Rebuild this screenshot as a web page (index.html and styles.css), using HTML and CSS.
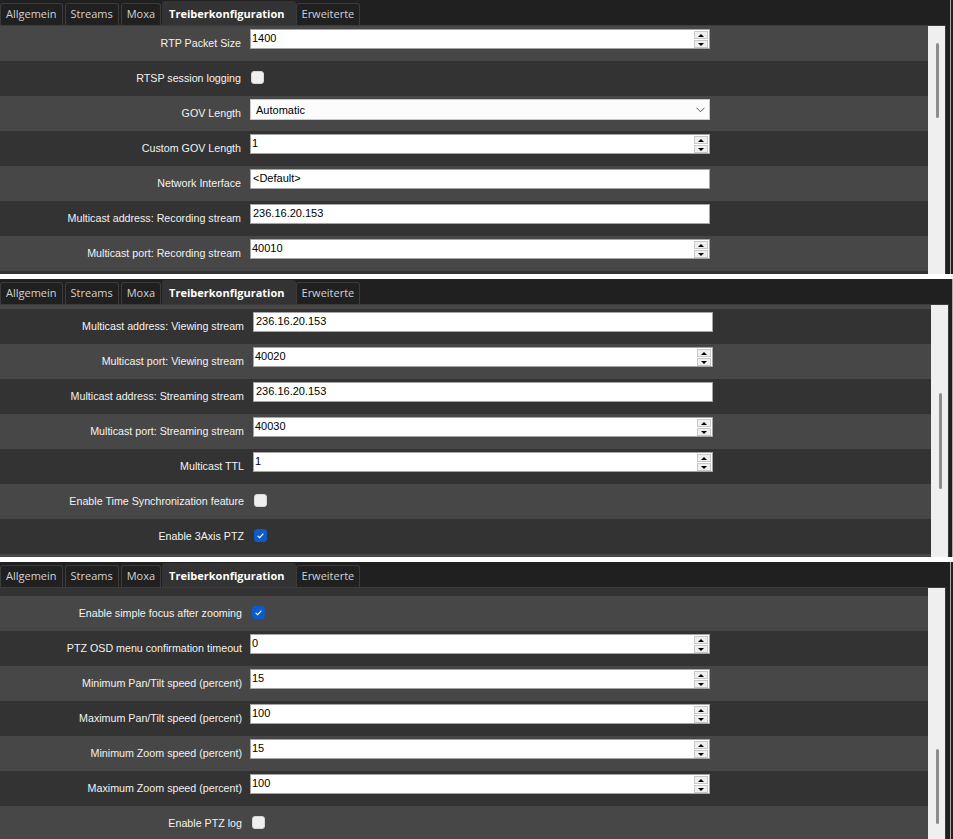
FILE: index.html
```html
<!DOCTYPE html>
<html>
<head>
<meta charset="utf-8">
<title>Treiberkonfiguration</title>
<link rel="stylesheet" href="styles.css">
</head>
<body>
<div class="stack">

  <section class="panel p1">
    <div class="main">
      <div class="tabbar">
        <div class="tab">Allgemein</div>
        <div class="tab">Streams</div>
        <div class="tab">Moxa</div>
        <div class="tab active">Treiberkonfiguration</div>
        <div class="tab">Erweiterte</div>
      </div>
      <div class="frame">
        <div class="rows">
          <div class="row l"><div class="label">RTP Packet Size</div><div class="input spin"><span class="value">1400</span><span class="spin-btns"><span class="sb up"></span><span class="sb down"></span></span></div></div>
          <div class="row d"><div class="label">RTSP session logging</div><span class="check"></span></div>
          <div class="row l"><div class="label">GOV Length</div><div class="select"><span class="value">Automatic</span><svg class="chev" width="9" height="6" viewBox="0 0 9 6"><polyline points="0.5,0.8 4.5,4.8 8.5,0.8" fill="none" stroke="#5a5a5a" stroke-width="1"/></svg></div></div>
          <div class="row d"><div class="label">Custom GOV Length</div><div class="input spin"><span class="value">1</span><span class="spin-btns"><span class="sb up"></span><span class="sb down"></span></span></div></div>
          <div class="row l"><div class="label">Network Interface</div><div class="input text"><span class="value">&lt;Default&gt;</span></div></div>
          <div class="row d"><div class="label">Multicast address: Recording stream</div><div class="input text"><span class="value">236.16.20.153</span></div></div>
          <div class="row l"><div class="label">Multicast port: Recording stream</div><div class="input spin"><span class="value">40010</span><span class="spin-btns"><span class="sb up"></span><span class="sb down"></span></span></div></div>
          <div class="part d h3"></div>
        </div>
        <div class="scrollbar"><div class="thumb"></div></div>
      </div>
    </div>
    <div class="edge"></div>
  </section>

  <section class="panel p2">
    <div class="main">
      <div class="tabbar">
        <div class="tab">Allgemein</div>
        <div class="tab">Streams</div>
        <div class="tab">Moxa</div>
        <div class="tab active">Treiberkonfiguration</div>
        <div class="tab">Erweiterte</div>
      </div>
      <div class="frame">
        <div class="rows">
          <div class="part l h4"></div>
          <div class="row d"><div class="label">Multicast address: Viewing stream</div><div class="input text"><span class="value">236.16.20.153</span></div></div>
          <div class="row l"><div class="label">Multicast port: Viewing stream</div><div class="input spin"><span class="value">40020</span><span class="spin-btns"><span class="sb up"></span><span class="sb down"></span></span></div></div>
          <div class="row d"><div class="label">Multicast address: Streaming stream</div><div class="input text"><span class="value">236.16.20.153</span></div></div>
          <div class="row l"><div class="label">Multicast port: Streaming stream</div><div class="input spin"><span class="value">40030</span><span class="spin-btns"><span class="sb up"></span><span class="sb down"></span></span></div></div>
          <div class="row d"><div class="label">Multicast TTL</div><div class="input spin"><span class="value">1</span><span class="spin-btns"><span class="sb up"></span><span class="sb down"></span></span></div></div>
          <div class="row l"><div class="label">Enable Time Synchronization feature</div><span class="check"></span></div>
          <div class="row d"><div class="label">Enable 3Axis PTZ</div><span class="check on"><svg width="13" height="13" viewBox="0 0 13 13"><polyline points="3.6,6.9 5.6,8.7 9.4,4.6" fill="none" stroke="#fff" stroke-width="1.1"/></svg></span></div>
          <div class="part l h3"></div>
        </div>
        <div class="scrollbar"><div class="thumb"></div></div>
      </div>
    </div>
    <div class="edge"></div>
  </section>

  <section class="panel p3">
    <div class="main">
      <div class="tabbar">
        <div class="tab">Allgemein</div>
        <div class="tab">Streams</div>
        <div class="tab">Moxa</div>
        <div class="tab active">Treiberkonfiguration</div>
        <div class="tab">Erweiterte</div>
      </div>
      <div class="frame">
        <div class="rows">
          <div class="part d h8"></div>
          <div class="row l"><div class="label">Enable simple focus after zooming</div><span class="check on"><svg width="13" height="13" viewBox="0 0 13 13"><polyline points="3.6,6.9 5.6,8.7 9.4,4.6" fill="none" stroke="#fff" stroke-width="1.1"/></svg></span></div>
          <div class="row d"><div class="label">PTZ OSD menu confirmation timeout</div><div class="input spin"><span class="value">0</span><span class="spin-btns"><span class="sb up"></span><span class="sb down"></span></span></div></div>
          <div class="row l"><div class="label">Minimum Pan/Tilt speed (percent)</div><div class="input spin"><span class="value">15</span><span class="spin-btns"><span class="sb up"></span><span class="sb down"></span></span></div></div>
          <div class="row d"><div class="label">Maximum Pan/Tilt speed (percent)</div><div class="input spin"><span class="value">100</span><span class="spin-btns"><span class="sb up"></span><span class="sb down"></span></span></div></div>
          <div class="row l"><div class="label">Minimum Zoom speed (percent)</div><div class="input spin"><span class="value">15</span><span class="spin-btns"><span class="sb up"></span><span class="sb down"></span></span></div></div>
          <div class="row d"><div class="label">Maximum Zoom speed (percent)</div><div class="input spin"><span class="value">100</span><span class="spin-btns"><span class="sb up"></span><span class="sb down"></span></span></div></div>
          <div class="row l"><div class="label">Enable PTZ log</div><span class="check"></span></div>
        </div>
        <div class="scrollbar"><div class="thumb"></div></div>
      </div>
    </div>
    <div class="edge"></div>
  </section>

</div>
</body>
</html>
```

FILE: styles.css
```css
* { box-sizing: border-box; }

html, body {
  margin: 0;
  padding: 0;
  background: #ffffff;
}

body {
  width: 953px;
  height: 839px;
  overflow: hidden;
  font-family: "Liberation Sans", Arial, sans-serif;
}

.stack {
  display: flex;
  flex-direction: column;
  gap: 5px;
}

.panel {
  display: flex;
  background: #202020;
  overflow: hidden;
  padding-right: 2px;
}

.p1 { height: 274px; }
.p2 { height: 278px; padding-right: 0; }
.p3 { height: 277px; }

.main {
  width: 946px;
  display: flex;
  flex-direction: column;
}

.p2 .main { width: 949px; }

.edge {
  width: 5px;
  border-right: 1px solid #a9a9a9;
}

.p2 .edge { width: 4px; }

/* Tabs */
.tabbar {
  height: 25px;
  flex: none;
  display: flex;
  align-items: flex-end;
  font-family: "Open Sans", "Noto Sans", sans-serif;
  font-size: 11px;
}

.tab {
  height: 22px;
  line-height: 20px;
  padding: 0 5px;
  margin-right: 2px;
  color: #d2d2d2;
  border: 1px solid #3b3b3b;
  border-bottom: none;
  border-radius: 3px 3px 0 0;
  white-space: nowrap;
}

.tab.active {
  height: 24px;
  line-height: 23px;
  padding: 0 10px 0 6px;
  margin-left: -1px;
  margin-right: 0;
  background: #333333;
  border-color: #333333;
  color: #ffffff;
  font-weight: 700;
}

/* Content frame */
.frame {
  flex: 1;
  display: flex;
  border-top: 1px solid #3c3c3c;
  border-right: 1px solid #3a3a3a;
  overflow: hidden;
}

.rows {
  flex: 1;
  display: flex;
  flex-direction: column;
}

.row {
  height: 35px;
  flex: none;
  display: flex;
  align-items: flex-start;
}

.l { background: #474747; }
.d { background: #333333; }

.part { flex: none; }
.h3 { height: 3px; }
.h4 { height: 4px; }
.h8 { height: 8px; }

.label {
  width: 241px;
  height: 35px;
  line-height: 35px;
  text-align: right;
  color: #f2f2f2;
  font-size: 10.7px;
  white-space: nowrap;
  margin-right: 9px;
}

.p2 .label { width: 244px; }
.p3 .label { width: 242px; margin-right: 8px; }

/* Inputs */
.input, .select {
  width: 460px;
  margin-top: 3px;
  display: flex;
  align-items: flex-start;
  background: #ffffff;
  font-size: 11px;
  color: #000;
}

.input {
  height: 20px;
  border: 1px solid #a5a5a5;
}

.select {
  height: 21px;
  border: 1px solid #c8c8c8;
  background: #fcfcfc;
  align-items: center;
}

.value {
  flex: 1;
  line-height: 16px;
  white-space: nowrap;
}

.spin .value { padding-left: 1px; }
.text .value { padding-left: 2px; }
.select .value { padding-left: 5px; line-height: 18px; }

.chev {
  margin-right: 4px;
  margin-top: 1px;
}

.spin-btns {
  width: 14px;
  margin: 1px 1px 0 0;
  display: flex;
  flex-direction: column;
}

.sb {
  height: 8px;
  background: #efefef;
  border: 1px solid #c9c9c9;
  display: flex;
  align-items: center;
  justify-content: center;
}

.sb.down { margin-top: 1px; }

.sb.up::before {
  content: "";
  border-left: 3px solid transparent;
  border-right: 3px solid transparent;
  border-bottom: 3px solid #000;
}

.sb.down::before {
  content: "";
  border-left: 3px solid transparent;
  border-right: 3px solid transparent;
  border-top: 3px solid #000;
}

/* Checkbox */
.check {
  width: 13px;
  height: 13px;
  margin-top: 10px;
  margin-left: 1px;
  border-radius: 3px;
  background: #efefef;
  border: 1px solid #d6d6d6;
  display: block;
}

.check svg { display: block; margin: -1px; }

.check.on {
  background: #0c5bc6;
  border-color: #0c5bc6;
}

.p3 .check { margin-left: 2px; }

/* Scrollbar */
.scrollbar {
  width: 17px;
  flex: none;
  background: #efefef;
  padding-left: 8px;
}

.thumb {
  width: 3px;
  background: #8c8c8c;
  border-radius: 2px;
}

.p1 .thumb { margin-top: 17px; height: 75px; }
.p2 .thumb { margin-top: 88px; height: 96px; }
.p3 .thumb { margin-top: 161px; height: 75px; }
```
